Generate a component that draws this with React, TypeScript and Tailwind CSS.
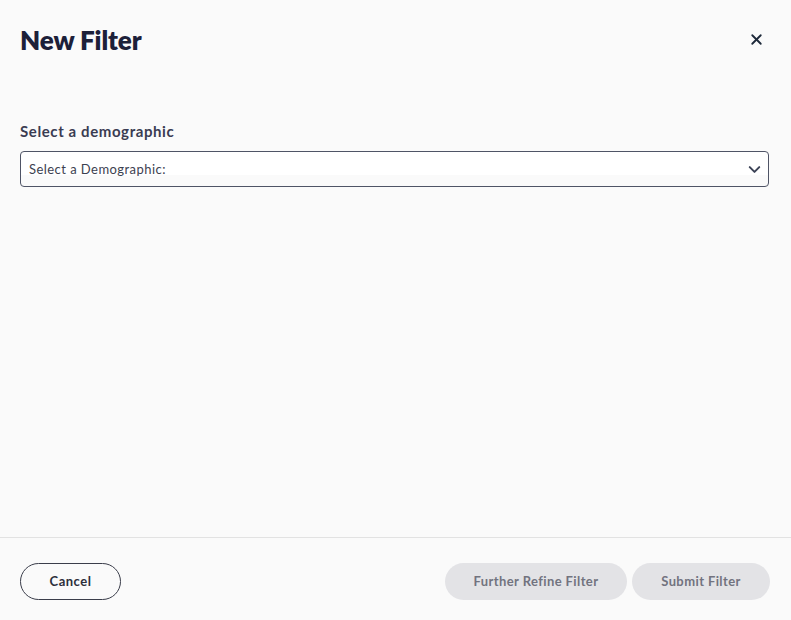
import { X, ChevronDown } from "lucide-react";

function App() {
  return (
    <div className="w-[791px] h-[620px] bg-[#fafafa] flex flex-col font-['Lato',sans-serif] text-[#1f2140]">
      <div className="flex-1 flex flex-col pl-5 pr-[22px]">
        <div className="flex items-center justify-between pt-[18px] h-[62px]">
          <h1 className="text-[26px] font-extrabold leading-none tracking-[-0.1px] text-[#1c2039]">New Filter</h1>
          <button className="mr-[4px] -mt-[2px] text-[#1e2a3a]">
            <X className="w-[17px] h-[17px]" strokeWidth={2.6} />
          </button>
        </div>

        <label className="mt-[59px] text-[15px] font-bold tracking-[0.6px] text-[#3a3c52] leading-[20px]">Select a demographic</label>
        <div className="mt-[10px] h-[36px] flex items-center justify-between border border-[#4f5466] rounded-[4px] pl-2 pr-[4px] bg-[linear-gradient(to_bottom,#ffffff_23px,#fafafa_23px)]">
          <span className="text-[13px] tracking-[0.45px] text-[#3c4150] pt-[1px]">Select a Demographic:</span>
          <ChevronDown className="w-[19px] h-[19px] text-[#3b4256]" strokeWidth={2.5} />
        </div>
      </div>

      <div className="h-[83px] border-t border-[#e2e2e2] flex items-center justify-between pl-5 pr-[21px] pt-[5px]">
        <button className="h-[37px] w-[101px] rounded-full border border-[#3a3d4a] text-[13px] font-bold tracking-[0.5px] text-[#2d2f3b]">
          Cancel
        </button>
        <div className="flex gap-[5px]">
          <button className="h-[37px] w-[182px] rounded-full bg-[#e3e3e6] text-[13px] font-bold tracking-[0.4px] text-[#72737f]">
            Further Refine Filter
          </button>
          <button className="h-[37px] w-[138px] rounded-full bg-[#e3e3e6] text-[13px] font-bold tracking-[0.4px] text-[#72737f]">
            Submit Filter
          </button>
        </div>
      </div>
    </div>
  );
}

export default App;
